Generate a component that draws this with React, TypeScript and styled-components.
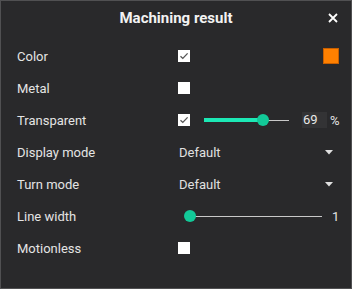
import React from "react";
import styled, { createGlobalStyle } from "styled-components";

const Global = createGlobalStyle`
  html, body { margin: 0; padding: 0; background: #29292b; }
  body { font-family: Roboto, "Liberation Sans", Arial, sans-serif; }
`;

const Window = styled.div`
  box-sizing: border-box;
  width: 352px;
  height: 289px;
  background: #29292b;
  border: 1px solid #505052;
  display: flex;
  flex-direction: column;
  color: #e4e4e4;
`;

const Header = styled.div`
  position: relative;
  height: 39px;
  display: flex;
  align-items: center;
  justify-content: center;
`;

const Title = styled.div`
  font-size: 15px;
  font-weight: 700;
  color: #f2f2f2;
  margin-top: -6px;
`;

const Close = styled.button`
  position: absolute;
  right: 12px;
  top: 11px;
  width: 12px;
  height: 12px;
  padding: 0;
  border: 0;
  background: transparent;
  display: flex;
  align-items: center;
  justify-content: center;
`;

const Body = styled.div`
  display: flex;
  flex-direction: column;
  padding: 0 12px 0 16px;
`;

const Row = styled.div`
  display: grid;
  grid-template-columns: 161px 1fr;
  align-items: center;
  height: 32px;
`;

const Label = styled.div`
  font-size: 13px;
  color: #e4e4e4;
`;

const Controls = styled.div`
  display: flex;
  align-items: center;
  height: 100%;
`;

const Box = styled.div`
  box-sizing: border-box;
  width: 12px;
  height: 12px;
  background: #ffffff;
  flex: none;
  display: flex;
  align-items: center;
  justify-content: center;
`;

const Swatch = styled.div<{ $color: string }>`
  box-sizing: border-box;
  width: 16px;
  height: 16px;
  margin-left: auto;
  background: ${(p) => p.$color};
  border: 1px solid #c85f00;
`;

const SliderWrap = styled.div<{ $width: number; $ml: number }>`
  position: relative;
  width: ${(p) => p.$width}px;
  height: 12px;
  margin-left: ${(p) => p.$ml}px;
  flex: none;
`;

const Rail = styled.div`
  position: absolute;
  left: 0;
  right: 0;
  top: 6px;
  height: 1px;
  background: #c8c8c8;
`;

const Fill = styled.div`
  position: absolute;
  left: 0;
  top: 4px;
  height: 4px;
  background: #1ce8b5;
`;

const Thumb = styled.div`
  position: absolute;
  top: 0;
  width: 12px;
  height: 12px;
  margin-left: -6px;
  border-radius: 50%;
  background: #12c998;
`;

const NumBox = styled.div`
  box-sizing: border-box;
  width: 25px;
  height: 16px;
  margin-left: 13px;
  padding-left: 1px;
  background: #333335;
  font-size: 13px;
  line-height: 16px;
  color: #e8e8e8;
`;

const Unit = styled.div`
  margin-left: 3px;
  font-size: 13px;
  color: #e4e4e4;
`;

const Value = styled.div`
  margin-left: 10px;
  font-size: 13px;
  color: #e4e4e4;
`;

const Select = styled.div`
  flex: 1;
  display: flex;
  align-items: center;
  justify-content: space-between;
  padding: 0 6px 0 1px;
  font-size: 13px;
  color: #e0e0e0;
`;

const Check = () => (
  <Box>
    <svg width="10" height="10" viewBox="0 0 10 10">
      <path d="M1.5 5.2 L3.8 7.4 L8.6 2.4" fill="none" stroke="#555" strokeWidth="1.3" />
    </svg>
  </Box>
);

const Slider = ({ width, value, ml }: { width: number; value: number; ml: number }) => (
  <SliderWrap $width={width} $ml={ml}>
    <Rail />
    <Fill style={{ width: `${value * 100}%` }} />
    <Thumb style={{ left: `${value * 100}%` }} />
  </SliderWrap>
);

const Arrow = () => (
  <svg width="8" height="5" viewBox="0 0 8 5">
    <path d="M0 0 H8 L4 4.5 Z" fill="#e0e0e0" />
  </svg>
);

export default function App() {
  return (
    <>
      <Global />
      <Window>
        <Header>
          <Title>Machining result</Title>
          <Close>
            <svg width="10" height="10" viewBox="0 0 10 10">
              <path d="M1 1 L9 9 M9 1 L1 9" stroke="#ffffff" strokeWidth="1.8" />
            </svg>
          </Close>
        </Header>
        <Body>
          <Row>
            <Label>Color</Label>
            <Controls>
              <Check />
              <Swatch $color="#ff8000" />
            </Controls>
          </Row>
          <Row>
            <Label>Metal</Label>
            <Controls>
              <Box />
            </Controls>
          </Row>
          <Row>
            <Label>Transparent</Label>
            <Controls>
              <Check />
              <Slider width={85} value={0.69} ml={14} />
              <NumBox>69</NumBox>
              <Unit>%</Unit>
            </Controls>
          </Row>
          <Row>
            <Label>Display mode</Label>
            <Controls>
              <Select>
                <span>Default</span>
                <Arrow />
              </Select>
            </Controls>
          </Row>
          <Row>
            <Label>Turn mode</Label>
            <Controls>
              <Select>
                <span>Default</span>
                <Arrow />
              </Select>
            </Controls>
          </Row>
          <Row>
            <Label>Line width</Label>
            <Controls>
              <Slider width={132} value={0} ml={12} />
              <Value>1</Value>
            </Controls>
          </Row>
          <Row>
            <Label>Motionless</Label>
            <Controls>
              <Box />
            </Controls>
          </Row>
        </Body>
      </Window>
    </>
  );
}
